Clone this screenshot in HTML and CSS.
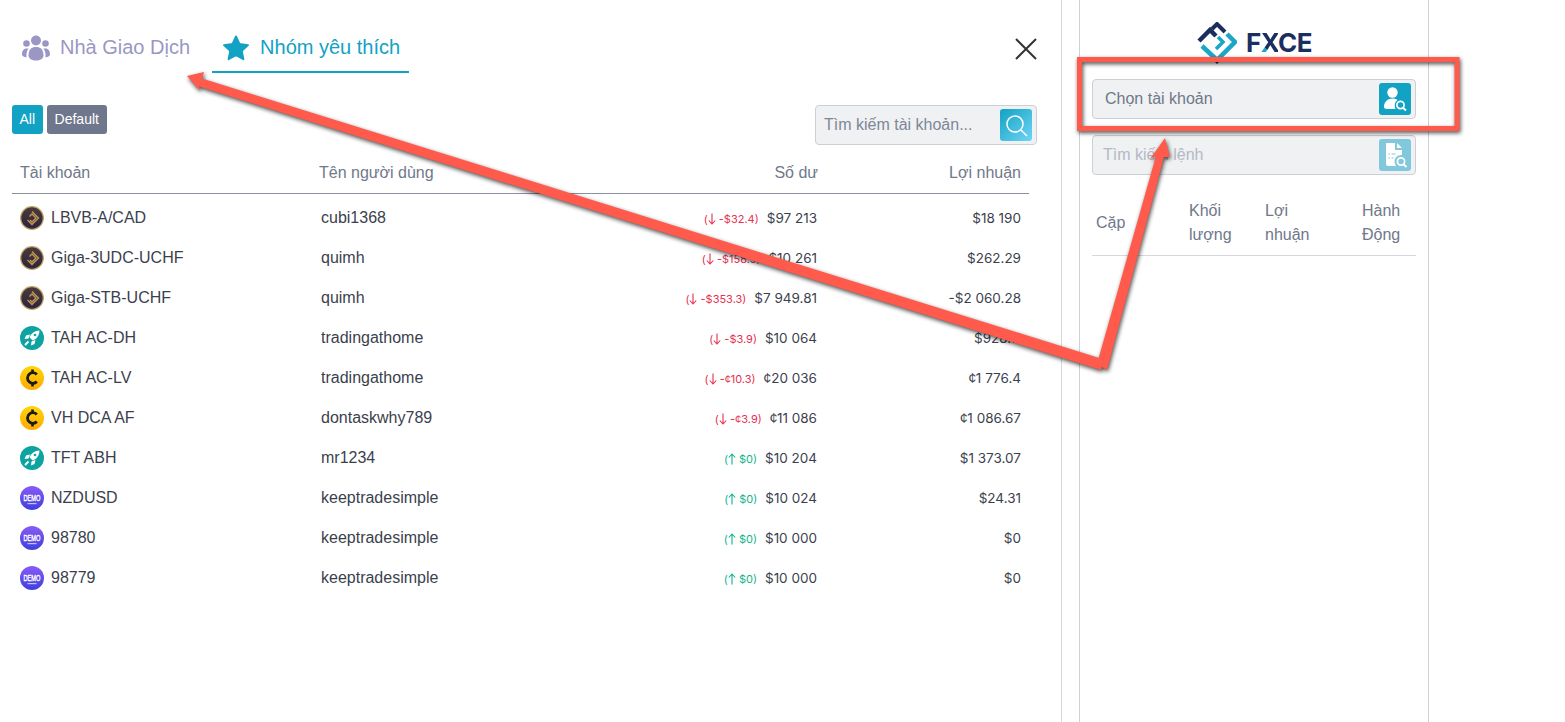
FILE: index.html
```html
<!DOCTYPE html>
<html>

<head>
    <title>FXCE</title>
    <link rel="stylesheet" href="styles.css">
</head>

<body>
    <svg class="defs" width="0" height="0">
        <defs>
            <linearGradient id="gold-bg" x1="0" y1="0" x2="0" y2="1">
                <stop offset="0" stop-color="#4a3a3c" />
                <stop offset="1" stop-color="#2c2440" />
            </linearGradient>
            <linearGradient id="yellow-bg" x1="0" y1="0" x2="0" y2="1">
                <stop offset="0" stop-color="#ffd60a" />
                <stop offset="1" stop-color="#ffab00" />
            </linearGradient>
            <linearGradient id="demo-bg" x1="0" y1="0" x2="0" y2="1">
                <stop offset="0" stop-color="#8a5cf6" />
                <stop offset="1" stop-color="#3d3fe0" />
            </linearGradient>
            <symbol id="arrow-down" viewBox="0 0 8 12">
                <path d="M4 .5v10.500M.8 7.500 4 11 7.200 7.500" fill="none" stroke="currentColor" stroke-width="1.100" />
            </symbol>
            <symbol id="arrow-up" viewBox="0 0 8 12">
                <path d="M4 11.500V1M.8 4.500 4 1 7.200 4.500" fill="none" stroke="currentColor" stroke-width="1.100" />
            </symbol>
            <symbol id="coin-gold" viewBox="0 0 24 24">
                <circle cx="12" cy="12" r="11.300" fill="url(#gold-bg)" stroke="#c4a666" stroke-width="1.200" />
                <path d="M12 5.500 18.500 12 12 18.500 7.500 14M9.500 10.500 12 8 16 12 12 16 10 14" fill="none" stroke="#c39a50" stroke-width="1.300" />
            </symbol>
            <symbol id="coin-rocket" viewBox="0 0 24 24">
                <circle cx="12" cy="12" r="12" fill="#0da3a0" />
                <path d="M19.500 4.500c-5 .2-8.300 2.800-10 6.800l3.200 3.200c4-1.700 6.600-5 6.800-10z" fill="#fff" />
                <path d="M10 8.500 6 9.500 4.500 13l4-.5zM15.500 14 14.500 18 11 19.500l.5-4z" fill="#fff" />
                <path d="M8.500 15.500 5 19" stroke="#fff" stroke-width="1.800" />
                <circle cx="15" cy="9" r="1.300" fill="#0da3a0" />
            </symbol>
            <symbol id="coin-cent" viewBox="0 0 24 24">
                <circle cx="12" cy="12" r="12" fill="url(#yellow-bg)" />
                <path d="M16.800 8.500a5.300 5.300 0 1 0 0 7" fill="none" stroke="#1c1a14" stroke-width="2.800" />
                <path d="M12.500 3.500v3.500M12.500 17v3.500" stroke="#1c1a14" stroke-width="2.600" />
            </symbol>
            <symbol id="coin-demo" viewBox="0 0 24 24">
                <circle cx="12" cy="12" r="12" fill="url(#demo-bg)" />
                <text class="demo-text" x="3.500" y="14.500" textLength="17" lengthAdjust="spacingAndGlyphs">DEMO</text>
                <rect x="7.500" y="17" width="9" height="1.200" fill="#c9bdf9" />
            </symbol>
            <symbol id="user-search" viewBox="0 0 32 32">
                <circle cx="13.500" cy="9.500" r="5.200" fill="#fff" />
                <path d="M5 24c0-5.500 4-8.500 8.500-8.500 2 0 3.700.5 5 1.500-2.500 1.500-3.500 5-2 9H8c-2 0-3-.8-3-2z" fill="#fff" />
                <circle cx="21.500" cy="22" r="3.600" fill="none" stroke="#fff" stroke-width="1.700" />
                <path d="M24 24.700 27 27.500" stroke="#fff" stroke-width="1.900" />
            </symbol>
            <symbol id="doc-search" viewBox="0 0 32 32">
                <path d="M7 4h9v7h7v5c-4-.5-7.500 2.500-7.500 6.500 0 1.500.5 3 1.500 4.500H9c-1.200 0-2-.8-2-2z" fill="#fff" />
                <path d="M18 4l5 5h-5z" fill="#fff" />
                <path d="M9.500 15h1.500M12.500 15h4M9.500 19h1.500M12.500 19h2" stroke="#82c8dd" stroke-width="1.200" />
                <circle cx="22" cy="22.500" r="3.600" fill="none" stroke="#fff" stroke-width="1.700" />
                <path d="M24.500 25.200 27.500 28" stroke="#fff" stroke-width="1.900" />
            </symbol>
        </defs>
    </svg>

    <div class="accounts">
        <div class="tabs">
            <div class="tab">
                <svg class="tab-icon" viewBox="0 0 28 25">
                    <circle cx="14" cy="5" r="5" fill="#9a97c4" />
                    <circle cx="4.500" cy="8" r="3.300" fill="#9a97c4" />
                    <circle cx="23.500" cy="8" r="3.300" fill="#9a97c4" />
                    <path d="M6.500 20c0-6 3-8.500 7.500-8.500s7.500 2.500 7.500 8.500c0 3-3.500 5-7.500 5s-7.500-2-7.500-5z" fill="#9a97c4" />
                    <path d="M4.500 13c-3 0-4.500 2.500-4.500 6 0 1 .7 1.800 2 2.300l2.500.7c-.3-3.500.2-6.500 2-9zM23.500 13c3 0 4.500 2.500 4.500 6 0 1-.7 1.800-2 2.300l-2.500.7c.3-3.500-.2-6.500-2-9z" fill="#9a97c4" />
                </svg>
                <span>Nhà Giao Dịch</span>
            </div>
            <div class="tab tab-active">
                <svg class="tab-icon" viewBox="0 0 28 27">
                    <path d="M14 1.500l3.700 7.900 8.800 1.100-6.500 6 1.700 8.700L14 20.900l-7.700 4.300L8 16.500l-6.500-6 8.800-1.100z" fill="#12a2c4" stroke="#12a2c4" stroke-width="2" stroke-linejoin="round" />
                </svg>
                <span>Nhóm yêu thích</span>
            </div>
            <svg class="close" viewBox="0 0 22 22">
                <path d="M1 1l20 20M21 1 1 21" stroke="#333" stroke-width="2" />
            </svg>
        </div>

        <div class="toolbar">
            <div class="chips">
                <span class="chip chip-on">All</span>
                <span class="chip">Default</span>
            </div>
            <div class="search">
                <span class="placeholder">Tìm kiếm tài khoản...</span>
                <span class="search-btn">
                    <svg viewBox="0 0 32 32" width="32" height="32">
                        <circle cx="15" cy="15" r="8" fill="none" stroke="#fff" stroke-width="1.500" />
                        <path d="M21 21l6 6" stroke="#fff" stroke-width="1.500" />
                    </svg>
                </span>
            </div>
        </div>

        <div class="table">
            <div class="thead">
                <span>Tài khoản</span>
                <span>Tên người dùng</span>
                <span class="num">Số dư</span>
                <span class="num">Lợi nhuận</span>
            </div>
            <div class="rows">
                <div class="row">
                    <span class="acc"><svg class="coin"><use href="#coin-gold" /></svg>LBVB-A/CAD</span>
                    <span>cubi1368</span>
                    <span class="money"><i class="delta down">(<svg class="arr"><use href="#arrow-down" /></svg> -$32.4)</i>$97 213</span>
                    <span class="money">$18 190</span>
                </div>
                <div class="row">
                    <span class="acc"><svg class="coin"><use href="#coin-gold" /></svg>Giga-3UDC-UCHF</span>
                    <span>quimh</span>
                    <span class="money"><i class="delta down">(<svg class="arr"><use href="#arrow-down" /></svg> -$158.5)</i>$10 261</span>
                    <span class="money">$262.29</span>
                </div>
                <div class="row">
                    <span class="acc"><svg class="coin"><use href="#coin-gold" /></svg>Giga-STB-UCHF</span>
                    <span>quimh</span>
                    <span class="money"><i class="delta down">(<svg class="arr"><use href="#arrow-down" /></svg> -$353.3)</i>$7 949.81</span>
                    <span class="money">-$2 060.28</span>
                </div>
                <div class="row">
                    <span class="acc"><svg class="coin"><use href="#coin-rocket" /></svg>TAH AC-DH</span>
                    <span>tradingathome</span>
                    <span class="money"><i class="delta down">(<svg class="arr"><use href="#arrow-down" /></svg> -$3.9)</i>$10 064</span>
                    <span class="money">$928.11</span>
                </div>
                <div class="row">
                    <span class="acc"><svg class="coin"><use href="#coin-cent" /></svg>TAH AC-LV</span>
                    <span>tradingathome</span>
                    <span class="money"><i class="delta down">(<svg class="arr"><use href="#arrow-down" /></svg> -¢10.3)</i>¢20 036</span>
                    <span class="money">¢1 776.4</span>
                </div>
                <div class="row">
                    <span class="acc"><svg class="coin"><use href="#coin-cent" /></svg>VH DCA AF</span>
                    <span>dontaskwhy789</span>
                    <span class="money"><i class="delta down">(<svg class="arr"><use href="#arrow-down" /></svg> -¢3.9)</i>¢11 086</span>
                    <span class="money">¢1 086.67</span>
                </div>
                <div class="row">
                    <span class="acc"><svg class="coin"><use href="#coin-rocket" /></svg>TFT ABH</span>
                    <span>mr1234</span>
                    <span class="money"><i class="delta up">(<svg class="arr"><use href="#arrow-up" /></svg> $0)</i>$10 204</span>
                    <span class="money">$1 373.07</span>
                </div>
                <div class="row">
                    <span class="acc"><svg class="coin"><use href="#coin-demo" /></svg>NZDUSD</span>
                    <span>keeptradesimple</span>
                    <span class="money"><i class="delta up">(<svg class="arr"><use href="#arrow-up" /></svg> $0)</i>$10 024</span>
                    <span class="money">$24.31</span>
                </div>
                <div class="row">
                    <span class="acc"><svg class="coin"><use href="#coin-demo" /></svg>98780</span>
                    <span>keeptradesimple</span>
                    <span class="money"><i class="delta up">(<svg class="arr"><use href="#arrow-up" /></svg> $0)</i>$10 000</span>
                    <span class="money">$0</span>
                </div>
                <div class="row">
                    <span class="acc"><svg class="coin"><use href="#coin-demo" /></svg>98779</span>
                    <span>keeptradesimple</span>
                    <span class="money"><i class="delta up">(<svg class="arr"><use href="#arrow-up" /></svg> $0)</i>$10 000</span>
                    <span class="money">$0</span>
                </div>
            </div>
        </div>
    </div>

    <div class="side">
        <div class="logo">
            <svg class="logo-mark" viewBox="0 0 40 42">
                <path d="M2 19 13 8 19 14" fill="none" stroke="#1b2f5e" stroke-width="4.500" />
                <path d="M15 7 20 2 28 10" fill="none" stroke="#1b2f5e" stroke-width="4" />
                <path d="M30 12 38 20 20 38 5 24" fill="none" stroke="#1ba6c8" stroke-width="4.500" />
                <path d="M19 27 26 20 21 15" fill="none" stroke="#1ba6c8" stroke-width="3.500" />
                <path d="M17 39h6l-3 3z" fill="#1b2f5e" />
            </svg>
            <span class="logo-text">F<span class="logo-x">X</span>CE</span>
        </div>
        <div class="field">
            <span class="field-label">Chọn tài khoản</span>
            <span class="field-btn"><svg width="32" height="32"><use href="#user-search" /></svg></span>
        </div>
        <div class="field field-off">
            <span class="field-label">Tìm kiếm lệnh</span>
            <span class="field-btn"><svg width="32" height="32"><use href="#doc-search" /></svg></span>
        </div>
        <div class="orders-head">
            <span>Cặp</span>
            <span>Khối lượng</span>
            <span>Lợi nhuận</span>
            <span>Hành Động</span>
        </div>
    </div>

    <svg class="marks" viewBox="0 0 1565 722">
        <rect class="mark-line" x="1079.500" y="59.500" width="377.500" height="69" />
        <path class="mark-head" d="M187 76 204 72 202 78.500 1104 359.500 1101 370 199 86.500 200 91z" />
        <path class="mark-head" d="M1165 138 1150 159 1156 156 1097 364 1107 370 1164 157 1170 157z" />
    </svg>
</body>

</html>
```

FILE: styles.css
```css
body {
    margin: 0;
    height: 100vh;
    display: flex;
    overflow: hidden;
    position: relative;
    background: #fff;
    font-family: "Liberation Sans", Arial, sans-serif;
    font-size: 16px;
    color: #3b3f4d;
}

.defs {
    position: absolute;
}

.demo-text {
    font-family: "Liberation Sans", Arial, sans-serif;
    font-size: 9px;
    font-weight: 400;
    fill: #fff;
    stroke: #fff;
    stroke-width: 0.4;
}

.accounts {
    width: 1061px;
    flex: none;
    border-right: 1px solid #d5d8dd;
}

.tabs {
    height: 73px;
    display: flex;
    padding: 0 24px 0 12px;
}

.tab {
    display: flex;
    align-items: center;
    gap: 10px;
    height: 71px;
    padding: 24px 10px 0;
    box-sizing: border-box;
    font-size: 20px;
    color: #9a97c4;
}

.tab-active {
    height: 73px;
    margin-left: 12px;
    padding-right: 9px;
    color: #12a2c4;
    border-bottom: 2px solid #12a2c4;
}

.tab-icon {
    width: 28px;
    height: 26px;
}

.close {
    width: 22px;
    height: 22px;
    margin: 38px 0 0 auto;
}

.toolbar {
    display: flex;
    justify-content: space-between;
    align-items: flex-start;
    height: 40px;
    margin-top: 32px;
    padding: 0 24px 0 12px;
}

.chips {
    display: flex;
    gap: 4px;
}

.chip {
    height: 29px;
    line-height: 28px;
    padding: 0 8px;
    border-radius: 3px;
    font-size: 14px;
    color: #fff;
    background: #6f778c;
}

.chip-on {
    padding: 0 7.500px;
    background: #12a2c4;
}

.search {
    width: 222px;
    height: 40px;
    box-sizing: border-box;
    display: flex;
    align-items: center;
    justify-content: space-between;
    padding: 0 4px 0 8px;
    background: #eff1f3;
    border: 1px solid #ccd0d6;
    border-radius: 4px;
}

.placeholder {
    color: #7f8796;
}

.search-btn {
    width: 32px;
    height: 32px;
    border-radius: 3px;
    background: linear-gradient(135deg, #12a2c4, #6fd4f5);
}

.table {
    width: 1017px;
    margin-left: 12px;
}

.thead {
    display: grid;
    grid-template-columns: 299px 200px 299px 203px;
    align-items: center;
    height: 41px;
    padding: 7px 8px 0;
    color: #70788a;
    border-bottom: 1px solid #8a909e;
}

.rows {
    padding-top: 4px;
}

.row {
    display: grid;
    grid-template-columns: 301px 200px 296px 204px;
    align-items: center;
    height: 40px;
    padding: 0 8px;
}

.num,
.money {
    text-align: right;
}

.acc {
    display: flex;
    align-items: center;
    gap: 7px;
}

.coin {
    width: 24px;
    height: 24px;
}

.money {
    font-family: Inter, "Liberation Sans", sans-serif;
    font-size: 13.500px;
    color: #3b3f4d;
}

.delta {
    font-style: normal;
    font-size: 11px;
    margin-right: 8px;
}

.arr {
    width: 8px;
    height: 12px;
    vertical-align: -2px;
}

.down {
    color: #e8304f;
}

.up {
    color: #12b48a;
}

.side {
    width: 324px;
    flex: none;
    margin-left: 17px;
    padding: 0 12px;
    border-left: 1px solid #cdd1d7;
    border-right: 1px solid #cdd1d7;
}

.logo {
    height: 79px;
    display: flex;
    justify-content: center;
    gap: 9px;
    padding: 22px 0 0;
    box-sizing: border-box;
    margin-left: 1px;
}

.logo-mark {
    width: 40px;
    height: 42px;
}

.logo-text {
    margin-top: 6px;
    font-family: Inter, "Liberation Sans", sans-serif;
    font-size: 26px;
    letter-spacing: -0.5px;
    line-height: 30px;
    font-weight: 700;
    color: #1b2f5e;
}

.logo-x {
    background: linear-gradient(45deg, #1ba6c8 30%, #1b2f5e 30%);
    -webkit-background-clip: text;
    background-clip: text;
    color: transparent;
}

.field {
    height: 40px;
    box-sizing: border-box;
    display: flex;
    align-items: center;
    justify-content: space-between;
    margin-bottom: 16px;
    padding: 0 4px 0 12px;
    background: #eff1f3;
    border: 1px solid #ccd0d6;
    border-radius: 4px;
}

.field-label {
    color: #70788a;
}

.field-btn {
    width: 32px;
    height: 32px;
    border-radius: 3px;
    background: #12a2c4;
}

.field-off .field-label {
    margin-left: -2px;
    color: #b4b9c3;
}

.field-off .field-btn {
    background: #82c8dd;
}

.orders-head {
    display: grid;
    grid-template-columns: 93px 76px 97px 1fr;
    align-items: center;
    margin-top: 24px;
    padding: 0 4px 8px;
    height: 48px;
    line-height: 24px;
    color: #70788a;
    border-bottom: 1px solid #d5d8dd;
}

.orders-head span {
    max-width: 60px;
}

.marks {
    position: absolute;
    left: 0;
    top: 0;
    width: 1565px;
    height: 722px;
    filter: drop-shadow(1px 2px 2px rgba(0, 0, 0, 0.7));
}

.mark-line {
    fill: none;
    stroke: #ff5a4b;
    stroke-width: 5;
}

.mark-head {
    fill: #ff5a4b;
}
```
